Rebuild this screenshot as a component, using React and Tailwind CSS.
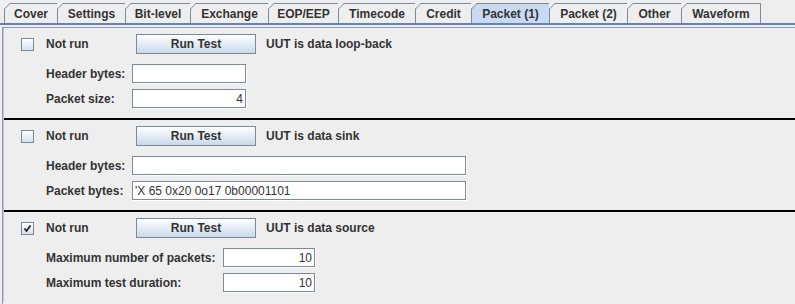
import React from 'react';

const tabs = [
    { label: 'Cover', w: 54 },
    { label: 'Settings', w: 68 },
    { label: 'Bit-level', w: 65 },
    { label: 'Exchange', w: 78 },
    { label: 'EOP/EEP', w: 70 },
    { label: 'Timecode', w: 77 },
    { label: 'Credit', w: 56 },
    { label: 'Packet (1)', w: 78, active: true },
    { label: 'Packet (2)', w: 78 },
    { label: 'Other', w: 54 },
    { label: 'Waveform', w: 79 },
];

function Tab({ label, w, active, first }) {
    return (
        <div
            className={`relative h-[20px] flex items-center justify-center border-t border-r border-[#7a8a99] text-[12px] font-bold text-[#333] ${first ? 'border-l' : ''} ${active ? 'bg-[#c8daf0]' : 'bg-[#eeeeee]'}`}
            style={{ width: w }}
        >
            <svg className="absolute -left-px -top-px" width="7" height="7" viewBox="0 0 7 7">
                <path d="M0 7 L0 6 L6 0 L7 0 L7 -1 L-1 -1 L-1 7 Z" fill="#eeeeee" />
                <path d="M0.5 7 L0.5 6 L6 0.5 L7 0.5" fill="none" stroke="#7a8a99" strokeWidth="1" />
            </svg>
            <span className="pt-px">{label}</span>
        </div>
    );
}

function Checkbox({ checked }) {
    return (
        <div className="w-[13px] h-[13px] border border-[#7a8a99] bg-gradient-to-b from-white to-[#d6e1ee] flex items-center justify-center">
            {checked && (
                <svg width="9" height="9" viewBox="0 0 9 9">
                    <path d="M1.5 4.5 L3.5 7 L7.5 1.5" fill="none" stroke="#222" strokeWidth="1.8" />
                </svg>
            )}
        </div>
    );
}

function Field({ width, value = '', right }) {
    return (
        <div
            className={`h-[19px] bg-white border border-[#7a8a99] shadow-[1px_1px_0_#ffffff] flex items-center px-[2px] text-[12px] text-[#333] ${right ? 'justify-end' : ''}`}
            style={{ width }}
        >
            {value}
        </div>
    );
}

function Section({ checked, desc, fields, labelW, fieldX }) {
    return (
        <div className="h-[90px] pt-[6px]">
            <div className="flex items-center h-[20px]">
                <div className="w-[17px]" />
                <Checkbox checked={checked} />
                <span className="ml-[12px] w-[90px] font-bold text-[12px] text-[#333]">Not run</span>
                <button className="w-[120px] h-[20px] border border-[#7a8a99] bg-gradient-to-b from-white to-[#c9d9ea] text-[12px] font-bold text-[#333]">
                    Run Test
                </button>
                <span className="ml-[10px] font-bold text-[12px] text-[#333]">{desc}</span>
            </div>
            <div className="mt-[10px] flex flex-col gap-[6px]">
                {fields.map((f) => (
                    <div key={f.label} className="flex items-center">
                        <span className="ml-[42px] font-bold text-[12px] text-[#333]" style={{ width: fieldX - 45 }}>
                            {f.label}
                        </span>
                        <Field width={f.w} value={f.value} right={f.right} />
                    </div>
                ))}
            </div>
        </div>
    );
}

export default function App() {
    return (
        <div className="w-[795px] h-[304px] bg-[#eeeeee] overflow-hidden font-['Liberation_Sans',Arial,sans-serif]">
            <div className="flex pl-[4px] pt-[3px]">
                {tabs.map((t, i) => (
                    <Tab key={t.label} {...t} first={i === 0} />
                ))}
            </div>
            <div className="h-[2px] bg-[#6382bf]" />
            <div className="h-[2px]" />
            <div className="ml-[2px] h-[278px] border-t border-l border-b border-[#8e9cac] border-b-[#a8a8a8]">
                <div className="border-l border-[#c0c8d2]">
                    <Section
                        desc="UUT is data loop-back"
                        fieldX={131}
                        fields={[
                            { label: 'Header bytes:', w: 114 },
                            { label: 'Packet size:', w: 114, value: '4', right: true },
                        ]}
                    />
                    <div className="h-[2px] bg-black" />
                    <Section
                        desc="UUT is data sink"
                        fieldX={131}
                        fields={[
                            { label: 'Header bytes:', w: 334 },
                            { label: 'Packet bytes:', w: 334, value: "'X 65 0x20 0o17 0b00001101" },
                        ]}
                    />
                    <div className="h-[2px] bg-black" />
                    <Section
                        checked
                        desc="UUT is data source"
                        fieldX={222}
                        fields={[
                            { label: 'Maximum number of packets:', w: 92, value: '10', right: true },
                            { label: 'Maximum test duration:', w: 92, value: '10', right: true },
                        ]}
                    />
                </div>
            </div>
        </div>
    );
}
